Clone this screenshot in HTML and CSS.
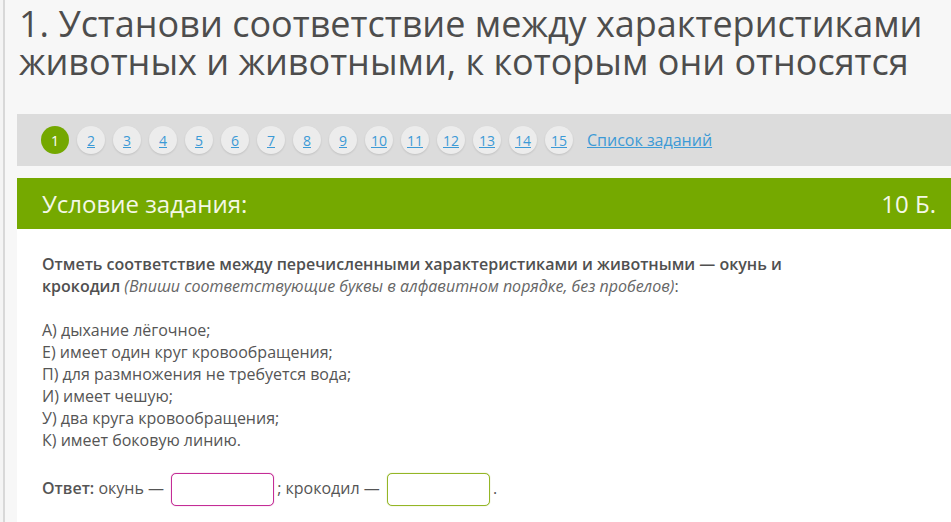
FILE: index.html
```html
<!DOCTYPE html>
<html lang="ru">
<head>
<meta charset="utf-8">
<link rel="stylesheet" href="styles.css">
</head>
<body>
<div class="page">
  <h1 class="title">1. Установи соответствие между характеристиками животных и животными, к которым они относятся</h1>
  <nav class="pager">
    <span class="num current">1</span>
    <a class="num" href="#">2</a>
    <a class="num" href="#">3</a>
    <a class="num" href="#">4</a>
    <a class="num" href="#">5</a>
    <a class="num" href="#">6</a>
    <a class="num" href="#">7</a>
    <a class="num" href="#">8</a>
    <a class="num" href="#">9</a>
    <a class="num" href="#">10</a>
    <a class="num" href="#">11</a>
    <a class="num" href="#">12</a>
    <a class="num" href="#">13</a>
    <a class="num" href="#">14</a>
    <a class="num" href="#">15</a>
    <a class="list-link" href="#">Список заданий</a>
  </nav>
  <section class="task">
    <header class="task-head">
      <span class="task-label">Условие задания:</span>
      <span class="task-score">10 Б.</span>
    </header>
    <div class="task-body">
      <p class="question"><b>Отметь соответствие между перечисленными характеристиками и животными — окунь и крокодил</b> <i>(Впиши соответствующие буквы в алфавитном порядке, без пробелов)</i>:</p>
      <p class="items">А) дыхание лёгочное;<br>Е) имеет один круг кровообращения;<br>П) для размножения не требуется вода;<br>И) имеет чешую;<br>У) два круга кровообращения;<br>К) имеет боковую линию.</p>
      <p class="answer"><b>Ответ:</b> окунь — <span class="field field-pink"></span>; крокодил — <span class="field field-green"></span>.</p>
    </div>
  </section>
</div>
</body>
</html>
```

FILE: styles.css
```css
html, body {
  margin: 0;
  padding: 0;
}
body {
  background: #f4f4f4;
  font-family: "Open Sans", "DejaVu Sans", sans-serif;
  color: #555;
  padding-left: 3px;
  height: 522px;
  overflow: hidden;
}
.page {
  border-left: 2px solid #d8d8d8;
  background: #f7f7f7;
  padding-left: 12px;
  min-height: 522px;
}
.title {
  margin: 0;
  padding: 5px 24px 33px 2px;
  font-weight: 400;
  font-size: 36px;
  line-height: 38px;
  color: #4d4d4d;
}
.pager {
  background: #dcdcdc;
  height: 52px;
  display: flex;
  align-items: center;
  padding-left: 24px;
  gap: 8px;
}
.num {
  width: 28px;
  height: 28px;
  border-radius: 50%;
  background: #ececec;
  box-shadow: 0 1px 2px rgba(0,0,0,0.12);
  display: flex;
  align-items: center;
  justify-content: center;
  font-size: 14px;
  color: #3c9ad6;
  text-decoration: underline;
}
.num.current {
  background: #74a800;
  color: #fff;
  text-decoration: none;
  box-shadow: none;
}
.list-link {
  margin-left: 6px;
  font-size: 16px;
  color: #3c9ad6;
  text-decoration: underline;
}
.task {
  margin-top: 12px;
  background: #fff;
}
.task-head {
  background: #75a900;
  height: 51px;
  display: flex;
  align-items: center;
  justify-content: space-between;
  padding: 0 15px 0 25px;
  color: #f4f8e6;
  font-size: 24px;
}
.task-body {
  padding: 24px 25px 30px;
  font-size: 16px;
  line-height: 22px;
}
.task-body p {
  margin: 0 0 22px;
}
.question {
  max-width: 770px;
}
.question b {
  font-weight: 600;
  color: #505050;
}
.question i {
  color: #666;
}
.answer b {
  font-weight: 600;
}
.field {
  display: inline-block;
  box-sizing: border-box;
  width: 103px;
  height: 33px;
  margin: 0 3px;
  border-radius: 5px;
  vertical-align: middle;
  background: #fff;
  border-width: 1px;
  border-style: solid;
}
.field-pink {
  border-color: #c42d96;
  box-shadow: 0 0 1px #d25fae;
}
.field-green {
  border-color: #94b626;
  box-shadow: 0 0 1px #a9c44f;
}
```
